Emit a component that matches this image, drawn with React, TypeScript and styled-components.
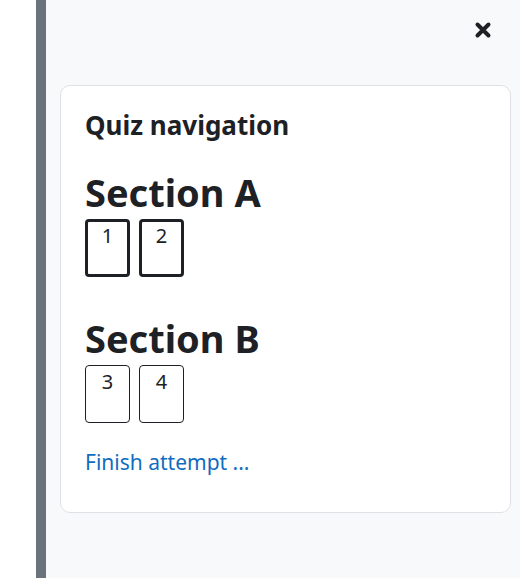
import React from "react";
import styled, { createGlobalStyle } from "styled-components";

const Global = createGlobalStyle`
  html, body { margin: 0; padding: 0; }
  body { font-family: "Noto Sans", "Open Sans", sans-serif; color: #1d2125; }
`;

const Page = styled.div`
  display: flex;
  width: 520px;
  height: 578px;
  background: #ffffff;
`;

const LeftSpace = styled.div`
  width: 36px;
  flex: none;
`;

const Bar = styled.div`
  width: 10px;
  flex: none;
  background: #6a737b;
`;

const Drawer = styled.div`
  flex: 1;
  background: #f8f9fa;
  display: flex;
  flex-direction: column;
  padding: 0 9px 0 14px;
`;

const DrawerHeader = styled.div`
  height: 85px;
  display: flex;
  justify-content: flex-end;
  align-items: flex-start;
`;

const CloseButton = styled.button`
  margin-top: 18px;
  margin-right: 16px;
  width: 24px;
  height: 24px;
  padding: 0;
  border: 0;
  background: transparent;
  display: flex;
  align-items: center;
  justify-content: center;
  color: #1d2125;
`;

const Card = styled.div`
  background: #fff;
  border: 1px solid #dee2e6;
  border-radius: 10px;
  padding: 24px 24px 36px 24px;
  height: 428px;
  box-sizing: border-box;
`;

const Title = styled.h5`
  margin: 0 0 30px 0;
  font-size: 26px;
  font-weight: 700;
  line-height: 1.2;
`;

const SectionHeading = styled.h2`
  margin: 0;
  font-size: 38px;
  font-weight: 700;
  line-height: 1.1;
  padding-top: 1px;
`;

const ButtonRow = styled.div<{ $mb: number }>`
  display: flex;
  gap: 9px;
  margin: 5px 0 ${(p) => p.$mb}px 0;
`;

const QButton = styled.a<{ $current?: boolean }>`
  box-sizing: border-box;
  width: 45px;
  height: 58px;
  border: ${(p) => (p.$current ? "3px solid #1d2125" : "1px solid #1d2125")};
  border-radius: 4px;
  display: flex;
  justify-content: center;
  font-size: 20px;
  line-height: 1;
  padding-top: ${(p) => (p.$current ? "4px" : "6px")};
  color: #1d2125;
`;

const FinishLink = styled.a`
  font-size: 21px;
  color: #0f6cbf;
  text-decoration: none;
`;

export default function App() {
  return (
    <>
      <Global />
      <Page>
        <LeftSpace />
        <Bar />
        <Drawer>
          <DrawerHeader>
            <CloseButton aria-label="Close">
              <svg width="18" height="18" viewBox="0 0 18 18">
                <path d="M3.5 3.5 L14.5 14.5 M14.5 3.5 L3.5 14.5" stroke="#1d2125" strokeWidth="4" strokeLinecap="round" />
              </svg>
            </CloseButton>
          </DrawerHeader>
          <Card>
            <Title>Quiz navigation</Title>
            <SectionHeading>Section A</SectionHeading>
            <ButtonRow $mb={40}>
              <QButton $current>1</QButton>
              <QButton $current>2</QButton>
            </ButtonRow>
            <SectionHeading>Section B</SectionHeading>
            <ButtonRow $mb={25}>
              <QButton>3</QButton>
              <QButton>4</QButton>
            </ButtonRow>
            <FinishLink href="#">Finish attempt ...</FinishLink>
          </Card>
        </Drawer>
      </Page>
    </>
  );
}
